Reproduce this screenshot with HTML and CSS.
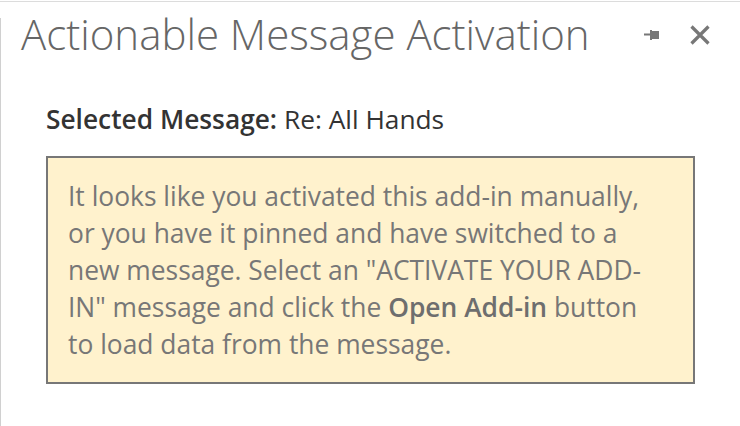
FILE: index.html
```html
<!DOCTYPE html>
<html>
<head>
<meta charset="utf-8">
<link rel="stylesheet" href="styles.css">
</head>
<body>
<div class="frame">
  <div class="pane">
    <header class="header">
      <h1 class="title">Actionable Message Activation</h1>
      <div class="actions">
        <svg class="pin" width="16" height="10" viewBox="0 0 16 10"><rect x="0" y="3.5" width="7" height="2" fill="#777"/><rect x="6" y="0" width="2" height="10" fill="#777"/><rect x="8" y="1" width="7" height="8" fill="#777"/></svg>
        <svg class="close" width="20" height="20" viewBox="0 0 20 20"><path d="M1.5 1.5 L18.5 18.5 M18.5 1.5 L1.5 18.5" stroke="#777" stroke-width="3.2" fill="none"/></svg>
      </div>
    </header>
    <main class="content">
      <p class="selected"><b>Selected Message:</b> Re: All Hands</p>
      <div class="notice">
        <p>It looks like you activated this add-in manually,<br>or you have it pinned and have switched to a<br>new message. Select an "ACTIVATE YOUR ADD-<br>IN" message and click the <b>Open Add-in</b> button<br>to load data from the message.</p>
      </div>
    </main>
  </div>
</div>
</body>
</html>
```
FILE: styles.css
```css
html, body {
  margin: 0;
  padding: 0;
  background: #fff;
  width: 740px;
  height: 426px;
  overflow: hidden;
}
body {
  font-family: "Open Sans", "Noto Sans", sans-serif;
}
.frame {
  margin-top: 1px;
  border-top: 1px solid #dcdcdc;
  height: 424px;
}
.pane {
  margin-top: 16px;
  border-left: 1px solid #d0d0d0;
  height: 408px;
  padding-left: 20px;
  padding-right: 30px;
}
.header {
  display: flex;
  align-items: flex-start;
  justify-content: space-between;
}
.title {
  margin: 0;
  font-weight: 300;
  font-size: 42px;
  line-height: 32px;
  color: #666;
  white-space: nowrap;
}
.actions {
  display: flex;
  align-items: center;
  gap: 30px;
  margin-top: 7px;
}
.pin {
  display: block;
}
.close {
  display: block;
}
.content {
  padding-left: 25px;
  padding-right: 15px;
}
.selected {
  margin: 54px 0 0 0;
  font-size: 26.3px;
  line-height: 30px;
  color: #333;
  white-space: nowrap;
}
.selected b {
  font-weight: 600;
}
.notice {
  margin-top: 22px;
  background: #fff2cd;
  border: 2px solid #777;
  padding: 20px 10px 20px 20px;
  height: 228px;
  box-sizing: border-box;
}
.notice p {
  margin: 0;
  font-size: 26.4px;
  line-height: 37px;
  color: #777;
  white-space: nowrap;
}
.notice b {
  font-weight: 600;
  color: #6e6e6e;
}
```
